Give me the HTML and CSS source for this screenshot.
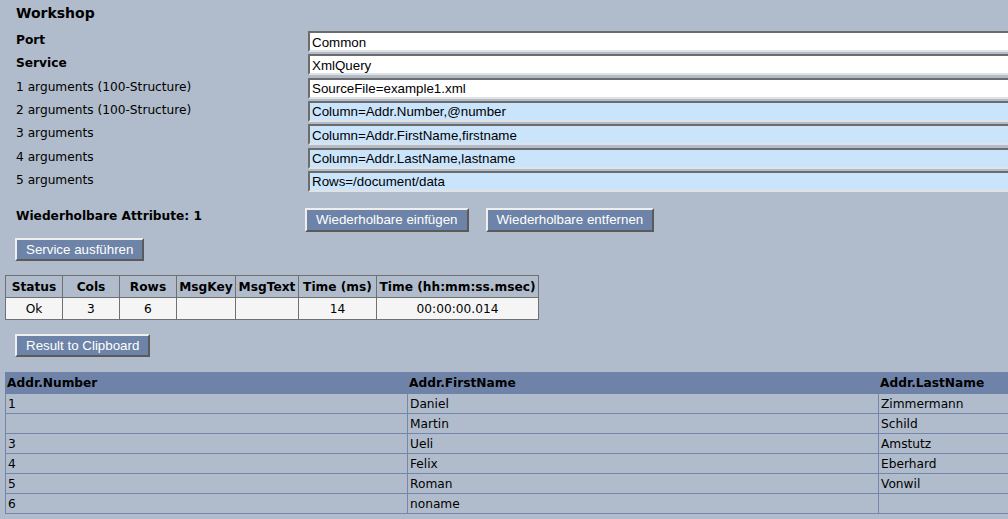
FILE: index.html
```html
<!DOCTYPE html>
<html lang="de">
<head>
<meta charset="utf-8">
<title>Workshop</title>
<link rel="stylesheet" href="styles.css">
</head>
<body>
<div class="page">
  <h1 class="title">Workshop</h1>

  <div class="form">
    <label class="lbl lbl-strong">Port</label><input class="field" type="text" value="Common">
    <label class="lbl lbl-strong">Service</label><input class="field" type="text" value="XmlQuery">
    <label class="lbl">1 arguments (100-Structure)</label><input class="field" type="text" value="SourceFile=example1.xml">
    <label class="lbl">2 arguments (100-Structure)</label><input class="field field-rep" type="text" value="Column=Addr.Number,@number">
    <label class="lbl">3 arguments</label><input class="field field-rep" type="text" value="Column=Addr.FirstName,firstname">
    <label class="lbl">4 arguments</label><input class="field field-rep" type="text" value="Column=Addr.LastName,lastname">
    <label class="lbl">5 arguments</label><input class="field field-rep" type="text" value="Rows=/document/data">
  </div>

  <div class="repeat-row">
    <span class="repeat-label">Wiederholbare Attribute: 1</span>
    <div class="repeat-actions">
      <button class="btn btn-tall" type="button">Wiederholbare einfügen</button>
      <button class="btn btn-tall" type="button">Wiederholbare entfernen</button>
    </div>
  </div>

  <div class="run-row">
    <button class="btn" type="button">Service ausführen</button>
  </div>

  <table class="status">
    <colgroup>
      <col class="c57"><col class="c57"><col class="c57"><col class="c59"><col class="c63"><col class="c78"><col class="c162">
    </colgroup>
    <thead>
      <tr><th>Status</th><th>Cols</th><th>Rows</th><th>MsgKey</th><th>MsgText</th><th>Time (ms)</th><th>Time (hh:mm:ss.msec)</th></tr>
    </thead>
    <tbody>
      <tr><td>Ok</td><td>3</td><td>6</td><td></td><td></td><td>14</td><td>00:00:00.014</td></tr>
    </tbody>
  </table>

  <div class="clip-row">
    <button class="btn" type="button">Result to Clipboard</button>
  </div>

  <table class="result">
    <colgroup>
      <col class="r1"><col class="r2"><col class="r3">
    </colgroup>
    <thead>
      <tr><th>Addr.Number</th><th>Addr.FirstName</th><th>Addr.LastName</th></tr>
    </thead>
    <tbody>
      <tr><td>1</td><td>Daniel</td><td>Zimmermann</td></tr>
      <tr><td></td><td>Martin</td><td>Schild</td></tr>
      <tr><td>3</td><td>Ueli</td><td>Amstutz</td></tr>
      <tr><td>4</td><td>Felix</td><td>Eberhard</td></tr>
      <tr><td>5</td><td>Roman</td><td>Vonwil</td></tr>
      <tr><td>6</td><td>noname</td><td></td></tr>
    </tbody>
  </table>
</div>
</body>
</html>
```
FILE: styles.css
```css
html, body {
  margin: 0;
  padding: 0;
  overflow: hidden;
  background: #b0bccb;
}

.page {
  width: 1300px;
  padding: 0 0 0 5px;
  font-family: "DejaVu Sans", Verdana, sans-serif;
  font-size: 12.2px;
  color: #000;
}

.title {
  margin: 4px 0 0 11px;
  font-size: 14px;
  line-height: 18px;
  font-weight: bold;
}

.form {
  margin: 9px 0 0 11px;
  display: grid;
  grid-template-columns: 292px 800px;
  row-gap: 2.34px;
  align-items: start;
}

.lbl {
  line-height: 18px;
}

.lbl-strong {
  font-weight: bold;
}

.field {
  box-sizing: border-box;
  height: 21px;
  margin: 0;
  padding: 1px 2px 0;
  border: 2px solid;
  border-color: #6c6c6c #e2e2e2 #e2e2e2 #6c6c6c;
  background: #fff;
  font-family: "Liberation Sans", Arial, sans-serif;
  font-size: 13.33px;
  color: #000;
  outline: none;
}

.field-rep {
  background: #cae4fc;
}

.repeat-row {
  margin: 16px 0 0 11px;
  display: flex;
  align-items: flex-start;
}

.repeat-label {
  width: 289px;
  font-weight: bold;
  line-height: 16px;
}

.repeat-actions {
  display: flex;
  gap: 17px;
}

.btn {
  box-sizing: border-box;
  height: 23px;
  margin: 0;
  padding: 0 9px;
  border: 2px solid;
  border-color: #eeeeee #5a5a5a #5a5a5a #eeeeee;
  background: #6d83a8;
  color: #fff;
  font-family: "Liberation Sans", Arial, sans-serif;
  font-size: 13.33px;
  line-height: 17px;
  white-space: nowrap;
}

.btn-tall {
  height: 24px;
}

.run-row {
  margin: 6px 0 0 10px;
}

.status {
  margin-top: 14px;
  border-collapse: collapse;
  table-layout: fixed;
  width: 533px;
}

.c57 { width: 57px; }
.c59 { width: 59px; }
.c63 { width: 63px; }
.c78 { width: 78px; }
.c162 { width: 162px; }

.status th,
.status td {
  height: 20px;
  padding: 1px 0 0;
  border: 1px solid #707070;
  text-align: center;
  white-space: nowrap;
  overflow: hidden;
}

.status th {
  font-weight: bold;
  background: #b0bccb;
}

.status td {
  background: #f5f5f5;
}

.clip-row {
  margin: 14px 0 0 10px;
}

.result {
  margin-top: 15px;
  border-collapse: collapse;
  table-layout: fixed;
  width: 1173px;
}

.r1 { width: 402px; }
.r2 { width: 471px; }
.r3 { width: 300px; }

.result th,
.result td {
  padding: 1px 2px 0 1px;
  text-align: left;
  white-space: nowrap;
  border: 1px solid #7487ab;
}

.result td {
  padding-left: 2px;
}

.result th {
  height: 19px;
  background: #6e83a7;
  border-color: #6e83a7;
  font-weight: bold;
}

.result td {
  height: 18px;
}
```
